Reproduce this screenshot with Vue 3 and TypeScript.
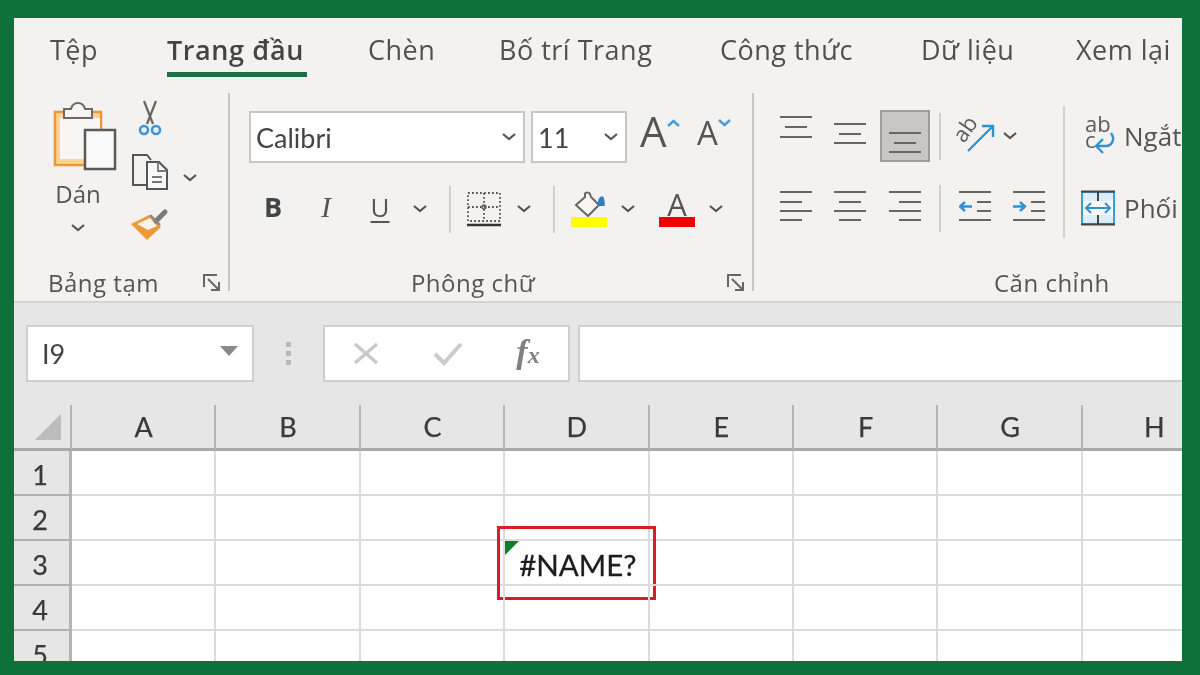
<script setup lang="ts">
const tabs: string[] = ['Tệp', 'Trang đầu', 'Chèn', 'Bố trí Trang', 'Công thức', 'Dữ liệu', 'Xem lại']
const columns: string[] = ['A', 'B', 'C', 'D', 'E', 'F', 'G', 'H']
const rows: number[] = [1, 2, 3, 4, 5]
</script>

<template>
  <div class="frame">
    <div class="app">
      <section class="ribbon">
        <nav class="tabs">
          <span v-for="(t, i) in tabs" :key="t" class="tab" :class="{ active: i === 1 }"><span class="tab-text">{{ t }}</span></span>
        </nav>

        <div class="groups">
          <!-- Clipboard -->
          <div class="group g-clip">
            <div class="clip-body">
              <div class="paste">
                <svg class="paste-icon" width="64" height="72" viewBox="0 0 64 72">
                  <rect x="2" y="12" width="46" height="53" fill="#fbd591" stroke="#e8993a" stroke-width="2.5" />
                  <rect x="7" y="18" width="40" height="41" fill="#f8f7f6" />
                  <path d="M11 18V9H18C20 1 30 1 32 9H39V18Z" fill="#f6f5f4" stroke="#6a6a6a" stroke-width="2" />
                  <rect x="32" y="30" width="30" height="39" fill="#f9f9f9" stroke="#5a5a5a" stroke-width="2.5" />
                </svg>
                <span class="paste-label">Dán</span>
                <svg class="chev paste-chev" width="14" height="8" viewBox="0 0 14 8"><path d="M1 1L7 6L13 1" /></svg>
              </div>
              <div class="clip-tools">
                <svg width="24" height="36" viewBox="0 0 24 36">
                  <path d="M6 1L15 24M18 1L9 24" fill="none" stroke="#666" stroke-width="2.2" />
                  <circle cx="6" cy="30" r="4" fill="#e8f1f8" stroke="#3f94d6" stroke-width="2.6" />
                  <circle cx="18" cy="30" r="4" fill="#e8f1f8" stroke="#3f94d6" stroke-width="2.6" />
                </svg>
                <span></span>
                <svg width="38" height="38" viewBox="0 0 38 38">
                  <path d="M15 32H2V2H16L20 7" fill="none" stroke="#555" stroke-width="2" />
                  <path d="M16 9H28L36 17V36H16Z" fill="#f8f8f8" stroke="#555" stroke-width="2" />
                  <path d="M27 9V18H36M21 24H31M21 29H31" fill="none" stroke="#777" stroke-width="1.8" />
                </svg>
                <svg class="chev" width="14" height="8" viewBox="0 0 14 8"><path d="M1 1L7 6L13 1" /></svg>
                <svg width="38" height="36" viewBox="0 0 38 36">
                  <path d="M0 17L18 8L30 20L16 33Z" fill="#ec9a35" />
                  <path d="M6 17L19 11L26 19L17 23Z" fill="#f8f3ec" />
                  <path d="M25 14L34 5" stroke="#7a7a7a" stroke-width="5" stroke-linecap="round" />
                  <path d="M19 8L29 18" stroke="#888" stroke-width="2.4" />
                </svg>
                <span></span>
              </div>
            </div>
            <div class="group-foot foot-clip">
              <span class="group-label">Bảng tạm</span>
              <svg class="launcher" width="18" height="18" viewBox="0 0 18 18"><path d="M1 13V1H14M5 5L16 16M16 8V16H8" /></svg>
            </div>
          </div>

          <!-- Font -->
          <div class="group g-font">
            <div class="font-row1">
              <div class="combo combo-font"><span class="calibri">Calibri</span><svg class="chev" width="14" height="8" viewBox="0 0 14 8"><path d="M1 1L7 6L13 1" /></svg></div>
              <div class="combo combo-size"><span class="calibri">11</span><svg class="chev" width="14" height="8" viewBox="0 0 14 8"><path d="M1 1L7 6L13 1" /></svg></div>
              <div class="grow">
                <span class="big-a">A</span>
                <svg class="caret" width="13" height="8" viewBox="0 0 13 8"><path d="M1 7L6.5 2L12 7" /></svg>
              </div>
              <div class="shrink">
                <span class="small-a">A</span>
                <svg class="caret" width="13" height="8" viewBox="0 0 13 8"><path d="M1 1L6.5 6L12 1" /></svg>
              </div>
            </div>
            <div class="font-row2">
              <span class="fmt-b">B</span>
              <span class="fmt-i">I</span>
              <span class="fmt-u">U</span>
              <svg class="chev" width="14" height="8" viewBox="0 0 14 8"><path d="M1 1L7 6L13 1" /></svg>
              <i class="sep"></i>
              <svg width="36" height="36" viewBox="0 0 36 36">
                <path d="M2 2H34V30H2ZM18 2V30M2 16H34" fill="none" stroke="#555" stroke-width="1.8" stroke-dasharray="1.8 2.2" />
                <circle cx="18" cy="16" r="2" fill="none" stroke="#666" stroke-width="1.4" />
                <path d="M1 34H35" stroke="#333" stroke-width="2.4" />
              </svg>
              <svg class="chev" width="14" height="8" viewBox="0 0 14 8"><path d="M1 1L7 6L13 1" /></svg>
              <i class="sep"></i>
              <div class="color-tool">
                <svg width="32" height="26" viewBox="0 0 32 26">
                  <path d="M3 14L12 6V3C12 1 16 1 17 3L18 6L26 14L15 25Z" fill="#f7f6f5" stroke="#666" stroke-width="2" />
                  <path d="M26 15C25 9 27 6 29 6C31 6 31 11 31 15" fill="#2f7fc0" stroke="#2f7fc0" stroke-width="1.6" />
                </svg>
                <i class="swatch yellow"></i>
              </div>
              <svg class="chev" width="14" height="8" viewBox="0 0 14 8"><path d="M1 1L7 6L13 1" /></svg>
              <div class="color-tool">
                <span class="color-a">A</span>
                <i class="swatch red"></i>
              </div>
              <svg class="chev" width="14" height="8" viewBox="0 0 14 8"><path d="M1 1L7 6L13 1" /></svg>
            </div>
            <div class="group-foot foot-font">
              <span class="group-label">Phông chữ</span>
              <svg class="launcher" width="18" height="18" viewBox="0 0 18 18"><path d="M1 13V1H14M5 5L16 16M16 8V16H8" /></svg>
            </div>
          </div>

          <!-- Alignment -->
          <div class="group g-align">
            <div class="align-grid">
              <svg class="lines" width="32" height="52" viewBox="0 0 32 52"><path d="M0 7H32M5 17H27M0 27H32" /></svg>
              <svg class="lines" width="32" height="52" viewBox="0 0 32 52"><path d="M0 14H32M5 24H27M0 33H32" /></svg>
              <div class="selected">
                <svg class="lines" width="32" height="48" viewBox="0 0 32 48"><path d="M0 21H32M5 31H27M0 40H32" /></svg>
              </div>
              <i class="sep"></i>
              <svg class="orient" width="40" height="38" viewBox="0 0 40 38">
                <text x="0" y="0" transform="translate(9 27) rotate(-55)" class="svg-ab">ab</text>
                <path d="M13 34L37 10M27 9H38V20" fill="none" stroke="#2f93d2" stroke-width="2.4" />
              </svg>
              <svg class="chev" width="14" height="8" viewBox="0 0 14 8"><path d="M1 1L7 6L13 1" /></svg>
              <span></span>
              <i class="sep sep-tall"></i>
              <div class="cut-tool">
                <svg class="wrap-icon" width="34" height="36" viewBox="0 0 34 36">
                  <text class="svg-ab"><tspan x="4" y="14">ab</tspan><tspan x="4" y="30">c</tspan></text>
                  <path d="M30 15C35 22 30 28 25 28H16M22 21L15 28L22 35" fill="none" stroke="#2f93d2" stroke-width="2.4" />
                </svg>
                <span class="cut-text">Ngắt</span>
              </div>

              <svg class="lines" width="32" height="48" viewBox="0 0 32 48"><path d="M0 8H32M0 18H22M0 27H32M0 36H22" /></svg>
              <svg class="lines" width="32" height="48" viewBox="0 0 32 48"><path d="M0 8H32M5 18H27M0 27H32M5 36H27" /></svg>
              <svg class="lines" width="32" height="48" viewBox="0 0 32 48"><path d="M0 8H32M10 18H32M0 27H32M10 36H32" /></svg>
              <i class="sep"></i>
              <svg class="lines" width="32" height="48" viewBox="0 0 32 48">
                <path d="M0 8H32M18 18H32M18 27H32M0 36H32" />
                <path class="blue-arrow" d="M13 22.5H1M6 18L1 22.5L6 27" />
              </svg>
              <svg class="lines span-two" width="32" height="48" viewBox="0 0 32 48">
                <path d="M0 8H32M18 18H32M18 27H32M0 36H32" />
                <path class="blue-arrow" d="M0 22.5H12M7 18L12 22.5L7 27" />
              </svg>
              <div class="cut-tool merge">
                <svg width="34" height="36" viewBox="0 0 34 36">
                  <rect x="1" y="2" width="32" height="32" fill="#dcecf8" stroke="#3a9bdc" stroke-width="2" />
                  <rect x="2" y="11" width="30" height="14" fill="#f8fbfd" />
                  <path d="M0 1.5H34M0 34.5H34M17 2V11M17 25V34" stroke="#444" stroke-width="2" fill="none" />
                  <path d="M5 18H29M10 13L5 18L10 23M24 13L29 18L24 23" fill="none" stroke="#2f93d2" stroke-width="2" />
                </svg>
                <span class="cut-text">Phối</span>
              </div>
            </div>
            <div class="group-foot foot-align">
              <span class="group-label">Căn chỉnh</span>
            </div>
          </div>
        </div>
      </section>

      <section class="formula-bar">
        <div class="name-box">
          <span class="calibri">I9</span>
          <i class="name-caret"></i>
        </div>
        <div class="grip"><i></i><i></i><i></i></div>
        <div class="fx-box">
          <svg width="26" height="23" viewBox="0 0 26 23"><path d="M2 2L24 21M24 2L2 21" stroke="#c9c9c9" stroke-width="3.4" /></svg>
          <svg width="30" height="25" viewBox="0 0 30 25"><path d="M2 13L11 22L28 3" fill="none" stroke="#cbcbcb" stroke-width="4" /></svg>
          <span class="fx">f<small>x</small></span>
        </div>
        <div class="formula-input"></div>
      </section>

      <section class="sheet">
        <div class="corner">
          <svg width="26" height="26" viewBox="0 0 26 26"><path d="M26 0V26H0Z" fill="#bcbcbc" /></svg>
        </div>
        <div v-for="c in columns" :key="c" class="col-head">{{ c }}</div>
        <template v-for="r in rows" :key="r">
          <div class="row-head">{{ r }}</div>
          <div v-for="c in columns" :key="c + r" class="cell">
            <template v-if="c === 'D' && r === 3">
              <i class="flag"></i>
              <span class="cell-text">#NAME?</span>
              <i class="highlight"></i>
            </template>
          </div>
        </template>
      </section>
    </div>
  </div>
</template>

<style>
html, body { margin: 0; background: #0e713a; }
</style>

<style scoped>
.frame {
  width: 1200px;
  height: 675px;
  box-sizing: border-box;
  padding: 18px 18px 14px 14px;
  background: #0e713a;
  overflow: hidden;
}
.app {
  width: 1168px;
  height: 643px;
  display: flex;
  flex-direction: column;
  overflow: hidden;
  background: #fff;
  font-family: "Open Sans", "Noto Sans", sans-serif;
  color: #444;
  filter: blur(0.45px);
}
.ribbon {
  height: 283px;
  flex: none;
  box-sizing: border-box;
  background: #f3f2f1;
  overflow: hidden;
}
.tabs {
  height: 75px;
  box-sizing: border-box;
  display: grid;
  grid-template-columns: 117px 201px 131px 221px 201px 155px 120px;
  padding-left: 36px;
}
.tab { font-size: 27px; letter-spacing: 0.5px; line-height: 30px; padding-top: 17px; white-space: nowrap; color: #505050; }
.tab-text { display: inline-block; }
.tab.active { color: #444; }
.tab.active .tab-text {
  font-weight: 600;
  letter-spacing: 0.6px;
  border-bottom: 5px solid #1f6f45;
  min-width: 140px;
  height: 37px;
}
.groups { display: flex; height: 198px; }
.group {
  height: 198px;
  flex: none;
  box-sizing: border-box;
  border-right: 2px solid #c8c6c4;
  position: relative;
  display: flex;
  flex-direction: column;
}
.g-clip { width: 216px; }
.g-font { width: 524px; }
.g-align { flex: 1 1 0; min-width: 0; border-right: 0; }
.group-foot {
  margin-top: auto;
  height: 20px;
  display: flex;
  align-items: center;
  position: relative;
  margin-bottom: -2px;
}
.group-label { font-size: 24px; letter-spacing: 0.5px; line-height: 20px; color: #555; white-space: nowrap; }
.foot-clip { padding-left: 34px; }
.foot-clip .launcher { margin-left: auto; margin-right: 7px; }
.foot-font { justify-content: center; padding-right: 36px; }
.foot-font .launcher { position: absolute; right: 7px; top: 1px; }
.foot-align { padding-left: 240px; }
.launcher { fill: none; stroke: #666; stroke-width: 2; flex: none; }
.chev { fill: none; stroke: #555; stroke-width: 2.2; flex: none; }

.clip-body { display: flex; padding: 7px 0 0 34px; }
.paste { width: 60px; display: flex; flex-direction: column; align-items: center; }
.paste-icon { align-self: flex-start; margin-left: 5px; flex: none; }
.paste-label { font-size: 24px; line-height: 30px; margin-top: 7px; color: #555; }
.paste-chev { margin-top: 15px; }
.clip-tools {
  margin-left: 22px;
  display: grid;
  grid-template-columns: 40px 40px;
  grid-template-rows: 53px 54px 36px;
  justify-items: center;
  align-items: start;
}
.clip-tools .chev { align-self: center; margin-top: -4px; }

.font-row1 { display: flex; align-items: center; padding: 18px 0 0 19px; height: 52px; }
.combo {
  height: 52px;
  box-sizing: border-box;
  background: #fff;
  border: 2px solid #c8c6c4;
  display: flex;
  align-items: center;
  justify-content: space-between;
  padding: 0 7px 0 5px;
}
.combo-font { width: 276px; }
.combo-size { width: 96px; margin-left: 6px; }
.calibri { font-family: Lato, "Open Sans", sans-serif; font-size: 27px; color: #444; }
.grow, .shrink { display: flex; align-items: flex-start; }
.grow { margin-left: 13px; width: 57px; height: 52px; }
.shrink { width: 40px; height: 52px; }
.big-a { font-size: 42px; line-height: 46px; color: #555; margin-top: -3px; }
.small-a { font-size: 33px; line-height: 46px; color: #555; margin-top: -1px; }
.caret { fill: none; stroke: #4a9fd4; stroke-width: 2.6; margin-top: 8px; }
.font-row2 {
  margin-top: 22px;
  height: 48px;
  padding-left: 26px;
  display: grid;
  grid-template-columns: 34px 72px 36px 44px 16px 52px 28px 32px 38px 40px 58px 20px;
  justify-items: center;
  align-items: center;
}
.sep { display: block; width: 2px; height: 47px; background: #d2d0ce; }
.fmt-b { font-weight: 700; font-size: 27px; color: #444; margin-top: -6px; }
.fmt-i { font-family: "Liberation Serif", serif; font-style: italic; font-size: 30px; color: #555; margin-top: -4px; }
.fmt-u { font-size: 26px; color: #555; text-decoration: underline; text-underline-offset: 4px; text-decoration-thickness: 2px; margin-top: -4px; }
.color-tool { display: flex; flex-direction: column; align-items: center; width: 36px; }
.swatch { display: block; width: 36px; height: 10px; }
.yellow { background: #ffff00; }
.red { background: #f00000; }
.color-a { font-size: 31px; line-height: 26px; height: 26px; color: #555; }

.align-grid {
  display: grid;
  grid-template-columns: 52px 56px 54px 16px 54px 16px 38px 16px 1fr;
  grid-template-rows: 52px 48px;
  row-gap: 22px;
  padding: 17px 0 0 16px;
  justify-items: center;
  align-items: center;
}
.lines { fill: none; stroke: #666; stroke-width: 2; }
.blue-arrow { stroke: #2f93d2; stroke-width: 2.4; }
.span-two { grid-column: 6 / 8; }
.orient { overflow: visible; }
.wrap-icon { overflow: visible; }
.selected {
  width: 50px;
  height: 52px;
  box-sizing: border-box;
  background: #c8c6c4;
  border: 2px solid #9e9c9a;
  display: flex;
  justify-content: center;
}
.sep-tall { grid-row: 1 / 3; grid-column: 8; height: 132px; align-self: start; margin-top: -4px; }
.cut-tool { justify-self: start; display: flex; align-items: center; gap: 9px; grid-column: 9; grid-row: 1; padding-left: 9px; }
.merge { grid-row: 2; }
.cut-text { font-size: 26px; color: #555; white-space: nowrap; }
.svg-ab { font-family: "Open Sans", sans-serif; font-size: 22px; fill: #5c5c5c; }

.formula-bar {
  height: 104px;
  flex: none;
  box-sizing: border-box;
  background: #e6e6e6;
  border-top: 2px solid #d4d4d4;
  padding: 22px 0 0 12px;
  display: flex;
  align-items: flex-start;
}
.name-box {
  width: 228px;
  height: 57px;
  box-sizing: border-box;
  background: #fff;
  border: 2px solid #cfcfcf;
  display: flex;
  align-items: center;
  justify-content: space-between;
  padding: 0 14px 0 14px;
}
.name-caret { width: 0; height: 0; border-left: 9px solid transparent; border-right: 9px solid transparent; border-top: 10px solid #8a8a8a; margin-top: -5px; }
.grip { width: 69px; height: 57px; display: flex; flex-direction: column; align-items: center; justify-content: center; gap: 4px; }
.grip i { width: 5px; height: 5px; background: #b8b8b8; }
.fx-box {
  width: 247px;
  height: 57px;
  box-sizing: border-box;
  background: #fff;
  border: 2px solid #cfcfcf;
  display: grid;
  grid-template-columns: 40px 124px 36px;
  padding-left: 21px;
  justify-items: center;
  align-items: center;
}
.fx { font-family: "Liberation Serif", serif; font-style: italic; font-weight: 700; font-size: 34px; line-height: 32px; color: #808080; white-space: nowrap; }
.fx small { font-size: 24px; }
.formula-input { flex: 1; height: 57px; margin-left: 8px; box-sizing: border-box; background: #fff; border: 2px solid #cfcfcf; border-right: 0; }

.sheet {
  flex: 1;
  overflow: hidden;
  display: grid;
  grid-template-columns: 58px repeat(8, 144.4px);
  grid-template-rows: 46px repeat(5, 45px);
  font-family: Lato, "Open Sans", sans-serif;
  background: #fff;
}
.corner, .col-head, .row-head { background: #e6e6e6; color: #3a3a3a; font-size: 27px; -webkit-text-stroke: 0.25px #3a3a3a; display: flex; align-items: center; justify-content: center; box-sizing: border-box; }
.corner { align-items: flex-end; justify-content: flex-end; padding: 0 9px 8px 0; border-right: 2px solid #b4b4b4; border-bottom: 3px solid #a9a9a9; }
.col-head { border-right: 2px solid #b4b4b4; border-bottom: 3px solid #a9a9a9; padding-left: 1px; }
.row-head { border-right: 3px solid #b4b4b4; border-bottom: 2px solid #b0b0b0; padding-right: 3px; padding-top: 3px; }
.cell { position: relative; box-sizing: border-box; border-right: 2px solid #dcdcdc; border-bottom: 2px solid #dcdcdc; display: flex; align-items: center; padding-left: 14px; }
.cell-text { font-size: 29.5px; color: #1e1e1e; -webkit-text-stroke: 0.3px #1e1e1e; white-space: nowrap; padding-top: 3px; }
.flag { position: absolute; left: 0; top: 0; width: 0; height: 0; border-top: 14px solid #0b7d2c; border-right: 14px solid transparent; }
.highlight { position: absolute; left: -8px; top: -15px; width: 159px; height: 74px; box-sizing: border-box; border: 3px solid #dc1c24; }
</style>
